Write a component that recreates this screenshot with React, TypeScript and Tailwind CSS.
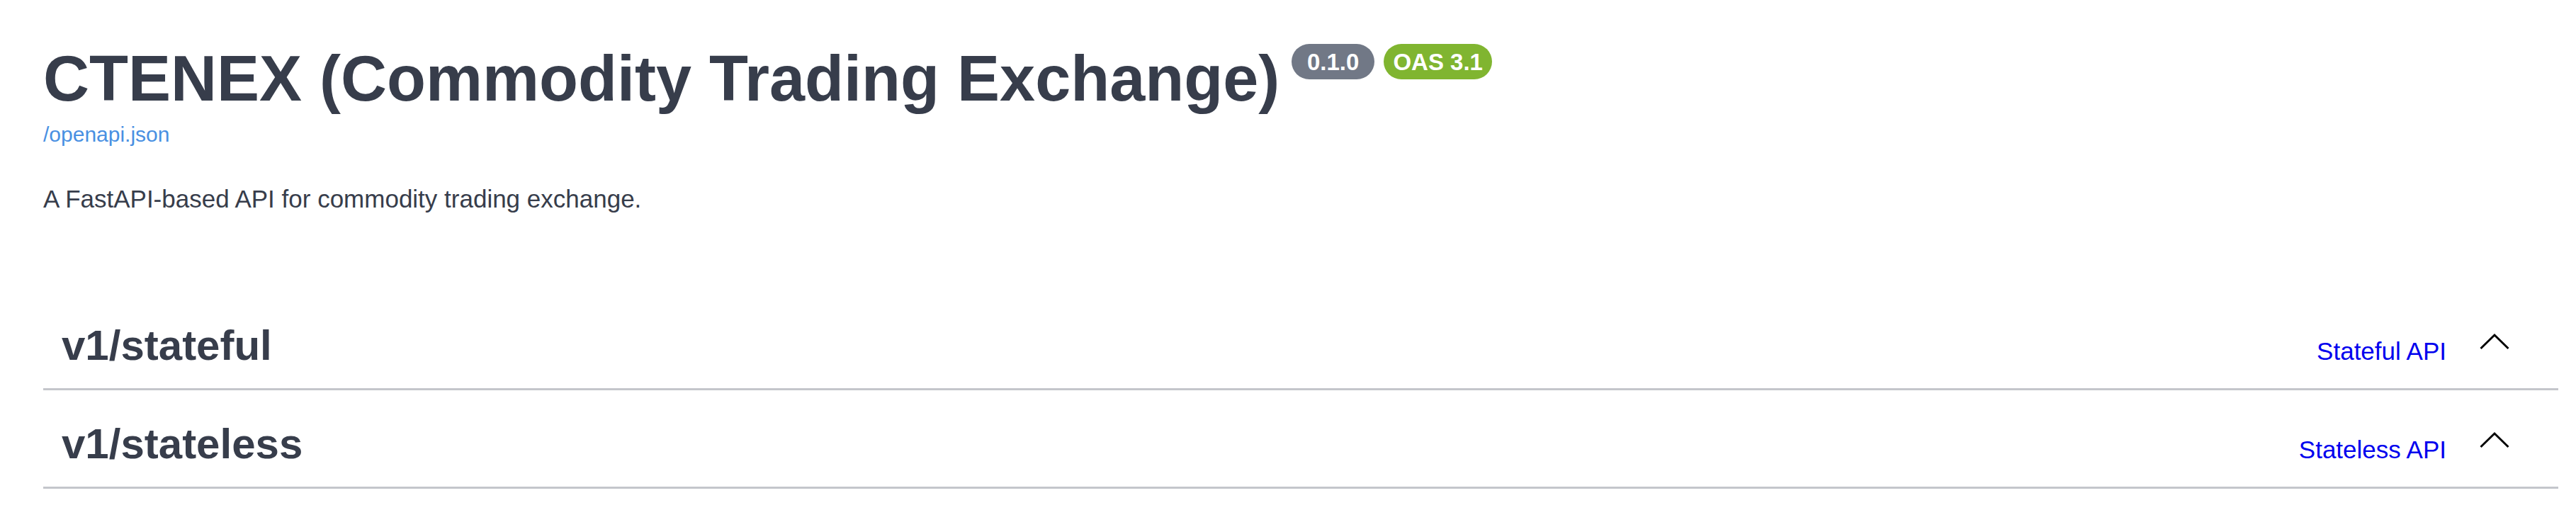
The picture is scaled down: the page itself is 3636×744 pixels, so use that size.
const tags = [
  { name: "v1/stateful", desc: "Stateful API" },
  { name: "v1/stateless", desc: "Stateless API" },
];

function Chevron() {
  return (
    <svg
      width="50"
      height="50"
      viewBox="0 0 50 50"
      className="ml-[43px] shrink-0"
      aria-hidden="true"
    >
      <path d="M5.5 34 L25 15 L44.5 34" fill="none" stroke="#000" strokeWidth="3" />
    </svg>
  );
}

function Badge({ text, color, width }: { text: string; color: string; width: string }) {
  return (
    <span
      className={`inline-flex items-center justify-center h-[50px] rounded-full text-white text-[33px] font-bold leading-none ${color} ${width}`}
    >
      {text}
    </span>
  );
}

export default function App() {
  return (
    <div className="min-h-screen w-full bg-white font-['Liberation_Sans',Arial,sans-serif] text-[#373d4b]">
      <div className="pt-[61px] pl-[61px] pr-[25px]">
        {/* Info header */}
        <div className="flex items-start">
          <h2 className="text-[90px] font-bold leading-[100px]">
            CTENEX (Commodity Trading Exchange)
          </h2>
          <div className="flex gap-[13px] ml-[17px] mt-[1px]">
            <Badge text="0.1.0" color="bg-[#717886]" width="w-[117px]" />
            <Badge text="OAS 3.1" color="bg-[#80b530]" width="w-[153px]" />
          </div>
        </div>
        <a className="block mt-[12px] text-[30px] leading-[34px] text-[#4990e2]">
          /openapi.json
        </a>
        <p className="mt-[54px] text-[35px] leading-[40px]">
          A FastAPI-based API for commodity trading exchange.
        </p>

        {/* Tag sections */}
        <div className="mt-[124px]">
          {tags.map((t) => (
            <div
              key={t.name}
              className="flex items-baseline pt-[29px] pb-[26px] pl-[26px] pr-[65px] mb-[13px] border-b-[3px] border-[#c4c6cb]"
            >
              <h3 className="text-[60px] font-bold leading-[68px]">{t.name}</h3>
              <span className="ml-auto text-[35px] leading-[40px] text-[#0000ee]">
                {t.desc}
              </span>
              <Chevron />
            </div>
          ))}
        </div>
      </div>
    </div>
  );
}
